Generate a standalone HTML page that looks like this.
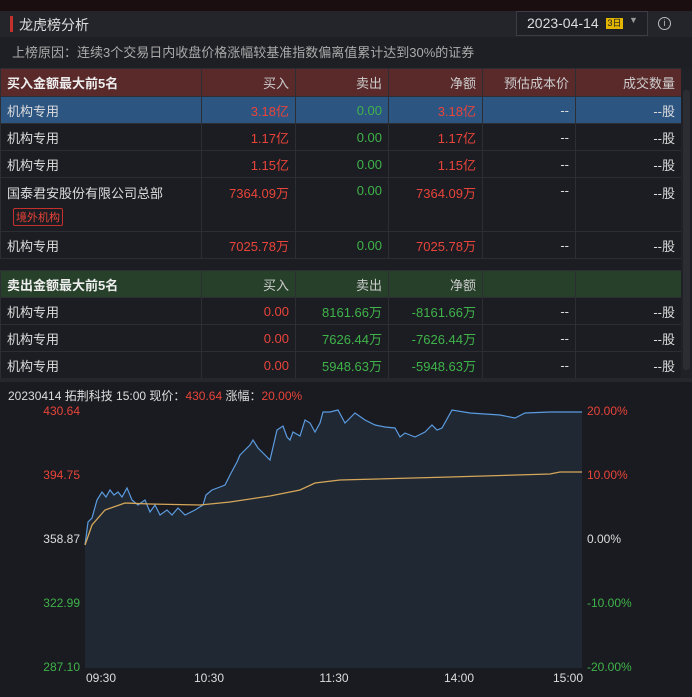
<!DOCTYPE html>
<html><head><meta charset="utf-8"><style>
body{margin:0;width:692px;height:693px;background:#1c1d22;font-family:"Liberation Sans","Noto Sans CJK SC",sans-serif;font-size:13px;color:#ddd;overflow:hidden;position:relative}
.abs{position:absolute}
.top{left:0;top:0;width:692px;height:11px;background:#1a0e10}
.hdr{left:0;top:11px;width:692px;height:26px;background:#24252b}
.reason{left:0;top:37px;width:692px;height:31px;background:#1e1f24;color:#aaa;font-size:13px;line-height:31px;padding-left:12px;box-sizing:border-box}
table{position:absolute;left:0;border-collapse:collapse;table-layout:fixed}
td{border:1px solid #2d2e34;padding:0 6px;text-align:right;height:26px;font-size:13px;white-space:nowrap}
td:first-child{text-align:left}
.r{color:#e8443a}.g{color:#3fb34a}
</style></head><body>
<div class="abs top"></div>
<div class="abs hdr">
<div class="abs" style="left:10px;top:5px;width:3px;height:16px;background:#c4302b"></div>
<div class="abs" style="left:19px;top:4px;font-size:14px;color:#ddd">龙虎榜分析</div>
<div class="abs" style="left:516px;top:0;width:132px;height:25px;border:1px solid #3c3d44;box-sizing:border-box;background:#1f2025"></div>
<div class="abs" style="left:527px;top:4px;font-size:14px;color:#ddd">2023-04-14</div>
<div class="abs" style="left:606px;top:7px;width:17px;height:11px;background:#e2b500;color:#222;font-size:9px;line-height:11px;text-align:center">3日</div>
<div class="abs" style="left:629px;top:4px;font-size:9px;color:#999">▼</div>
<div class="abs" style="left:658px;top:6px;width:11px;height:11px;border:1px solid #bbb;border-radius:50%;font-size:9px;line-height:11px;text-align:center;color:#bbb">i</div>
</div>
<div class="abs reason">上榜原因：连续3个交易日内收盘价格涨幅较基准指数偏离值累计达到30%的证券</div>
<table style="top:68px;width:681px">
<colgroup><col style="width:201px"><col style="width:94px"><col style="width:93px"><col style="width:94px"><col style="width:93px"><col style="width:106px"></colgroup>
<tr style="background:#5a2a2b;color:#ccc;height:28px"><td style="font-weight:bold;color:#eee">买入金额最大前5名</td><td>买入</td><td>卖出</td><td>净额</td><td>预估成本价</td><td>成交数量</td></tr>
<tr style="background:#2d5582"><td>机构专用</td><td class="r">3.18亿</td><td class="g">0.00</td><td class="r">3.18亿</td><td>--</td><td>--股</td></tr>
<tr><td>机构专用</td><td class="r">1.17亿</td><td class="g">0.00</td><td class="r">1.17亿</td><td>--</td><td>--股</td></tr>
<tr><td>机构专用</td><td class="r">1.15亿</td><td class="g">0.00</td><td class="r">1.15亿</td><td>--</td><td>--股</td></tr>
<tr style="height:54px;vertical-align:top"><td style="padding-top:5px">国泰君安股份有限公司总部<br><span style="display:inline-block;margin:6px 0 0 6px;border:1px solid #c4302b;color:#e8443a;font-size:11px;padding:0 2px;border-radius:2px">境外机构</span></td><td class="r" style="padding-top:5px">7364.09万</td><td class="g" style="padding-top:5px">0.00</td><td class="r" style="padding-top:5px">7364.09万</td><td style="padding-top:5px">--</td><td style="padding-top:5px">--股</td></tr>
<tr><td>机构专用</td><td class="r">7025.78万</td><td class="g">0.00</td><td class="r">7025.78万</td><td>--</td><td>--股</td></tr>
</table>
<table style="top:270px;width:681px">
<colgroup><col style="width:201px"><col style="width:94px"><col style="width:93px"><col style="width:94px"><col style="width:93px"><col style="width:106px"></colgroup>
<tr style="background:#26402a;color:#ccc;height:27px"><td style="font-weight:bold;color:#eee">卖出金额最大前5名</td><td>买入</td><td>卖出</td><td>净额</td><td></td><td></td></tr>
<tr><td>机构专用</td><td class="r">0.00</td><td class="g">8161.66万</td><td class="g">-8161.66万</td><td>--</td><td>--股</td></tr>
<tr><td>机构专用</td><td class="r">0.00</td><td class="g">7626.44万</td><td class="g">-7626.44万</td><td>--</td><td>--股</td></tr>
<tr><td>机构专用</td><td class="r">0.00</td><td class="g">5948.63万</td><td class="g">-5948.63万</td><td>--</td><td>--股</td></tr>
</table>
<div class="abs" style="left:681px;top:68px;width:11px;height:310px;background:#202126"><div style="margin:22px 2px;width:7px;height:280px;background:#2c2d32;border-radius:3px"></div></div>
<div class="abs" style="left:0;top:378px;width:692px;height:315px;background:#1a1b20;border-top:4px solid #26272c"></div>
<div class="abs" style="left:8px;top:387px;font-size:12px;color:#ddd">20230414 拓荆科技 15:00 现价：<span class="r">430.64</span> 涨幅：<span class="r">20.00%</span></div>
<svg class="abs" style="left:0;top:0" width="692" height="693">
<polygon fill="#1f2833" points="85,668 85,545 88,522 92,518 97,500 102,492 106,497 110,490 114,495 118,492 122,497 127,488 132,500 138,505 145,500 150,512 155,505 160,515 167,510 172,515 178,508 185,515 195,510 203,505 206,495 212,490 220,487 225,485 230,475 237,462 240,455 245,450 250,445 253,440 258,448 265,455 270,460 277,430 283,426 287,437 290,440 293,432 300,436 305,420 310,423 315,432 320,423 323,412 330,412 338,410 345,423 355,413 365,420 375,425 385,427 395,428 400,437 405,433 415,437 425,432 432,425 437,430 442,428 452,410 470,413 500,415 515,418 525,413 550,412 582,412 582,668"/>
<polyline fill="none" stroke="#5b9be0" stroke-width="1.2" points="85,545 88,522 92,518 97,500 102,492 106,497 110,490 114,495 118,492 122,497 127,488 132,500 138,505 145,500 150,512 155,505 160,515 167,510 172,515 178,508 185,515 195,510 203,505 206,495 212,490 220,487 225,485 230,475 237,462 240,455 245,450 250,445 253,440 258,448 265,455 270,460 277,430 283,426 287,437 290,440 293,432 300,436 305,420 310,423 315,432 320,423 323,412 330,412 338,410 345,423 355,413 365,420 375,425 385,427 395,428 400,437 405,433 415,437 425,432 432,425 437,430 442,428 452,410 470,413 500,415 515,418 525,413 550,412 582,412"/>
<polyline fill="none" stroke="#d6a75a" stroke-width="1.3" points="85,545 92,525 105,510 125,503 150,504 200,505 230,502 270,496 300,490 315,483 340,480 450,477 550,474 560,472 582,472"/>
<g font-size="12" font-family="Liberation Sans,sans-serif">
<text x="80" y="415" text-anchor="end" fill="#e8443a">430.64</text>
<text x="80" y="479" text-anchor="end" fill="#e8443a">394.75</text>
<text x="80" y="543" text-anchor="end" fill="#ddd">358.87</text>
<text x="80" y="607" text-anchor="end" fill="#3fb34a">322.99</text>
<text x="80" y="671" text-anchor="end" fill="#3fb34a">287.10</text>
<text x="587" y="415" fill="#e8443a">20.00%</text>
<text x="587" y="479" fill="#e8443a">10.00%</text>
<text x="587" y="543" fill="#ddd">0.00%</text>
<text x="587" y="607" fill="#3fb34a">-10.00%</text>
<text x="587" y="671" fill="#3fb34a">-20.00%</text>
<g fill="#ddd" text-anchor="middle"><text x="101" y="682">09:30</text><text x="209" y="682">10:30</text><text x="334" y="682">11:30</text><text x="459" y="682">14:00</text><text x="568" y="682">15:00</text></g>
</g></svg>
</body></html>
